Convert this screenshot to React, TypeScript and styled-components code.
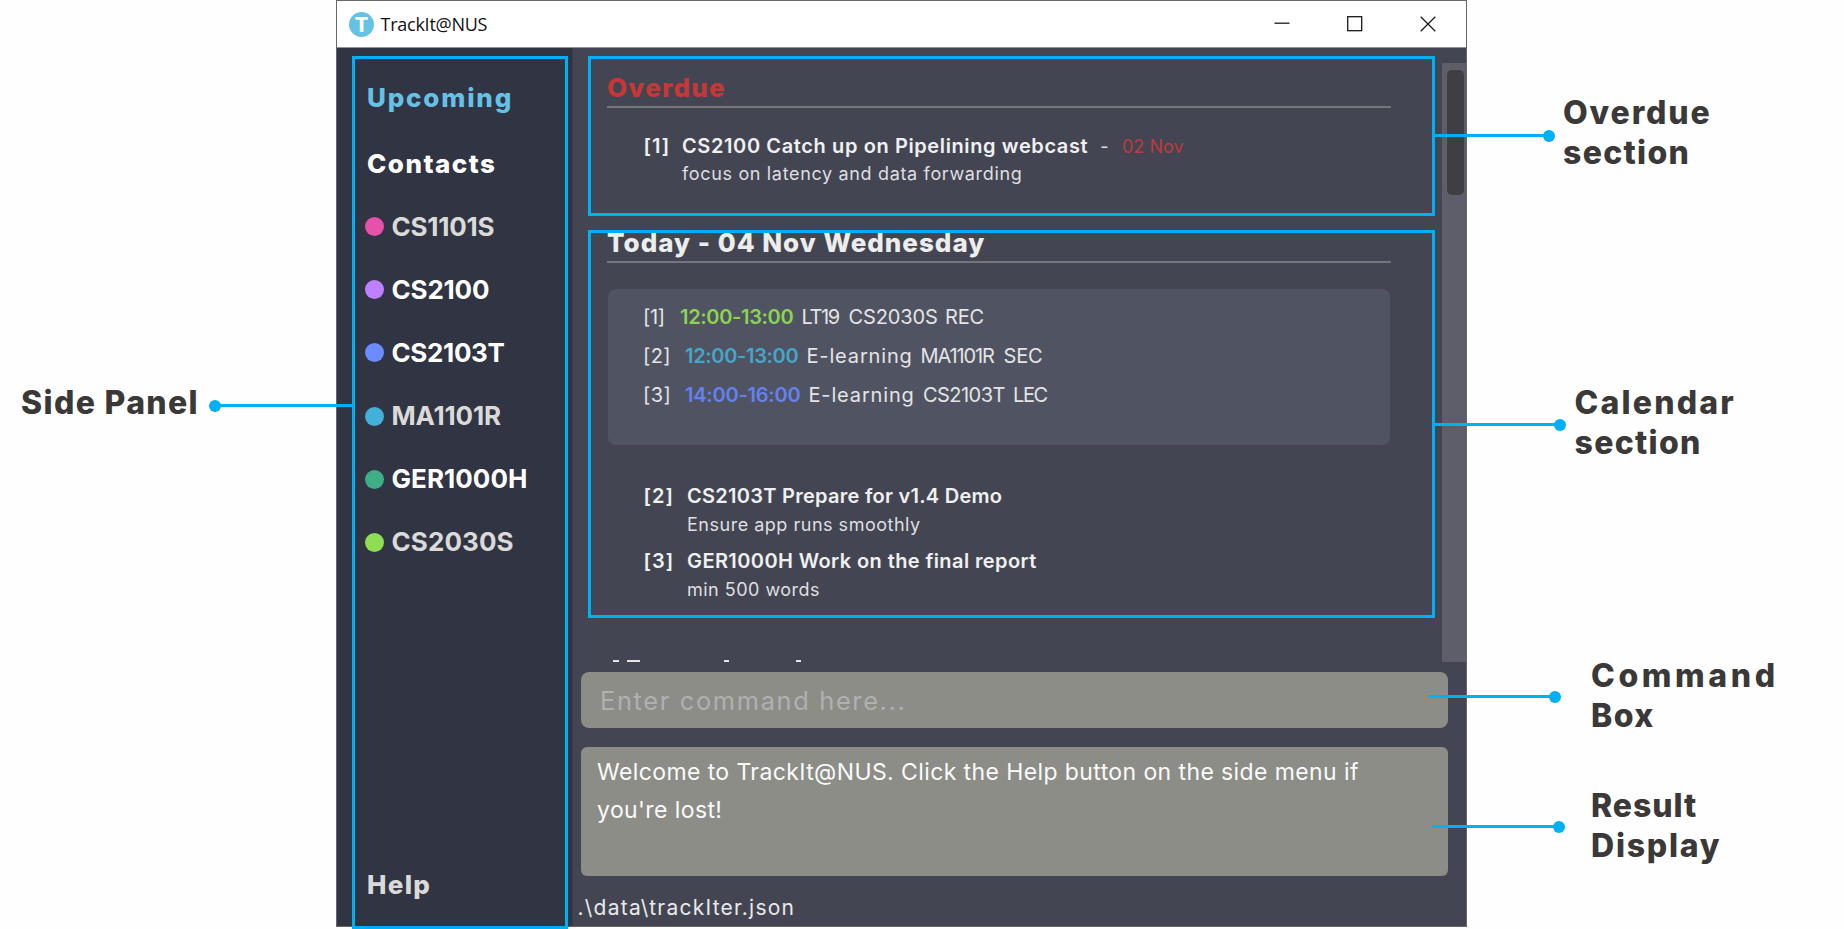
import React from "react";
import styled, { createGlobalStyle } from "styled-components";

const ACCENT = "#00b0f4";

const GlobalStyle = createGlobalStyle`
  * { box-sizing: border-box; }
  body {
    margin: 0;
    background: #fefefe;
    font-family: Inter, "Liberation Sans", sans-serif;
    overflow: hidden;
  }
`;

const Page = styled.div`
  position: relative;
  display: flex;
  width: 1844px;
  height: 929px;
  overflow: hidden;
`;

/* ---------- annotation labels ---------- */

const LeftNotes = styled.div`
  width: 336px;
  padding: 383px 0 0 21px;
`;

const RightNotes = styled.div`
  width: 377px;
  padding-top: 93px;
  display: flex;
  flex-direction: column;
`;

const Note = styled.div<{ $top?: number; $left?: number }>`
  margin-top: ${(p) => p.$top ?? 0}px;
  margin-left: ${(p) => p.$left ?? 0}px;
  font-size: 32px;
  line-height: 40px;
  font-weight: 800;
  color: #3a3938;
  white-space: nowrap;
`;

const NoteLine = styled.div<{ $ls: number }>`
  letter-spacing: ${(p) => p.$ls}px;
`;

/* ---------- annotation overlay ---------- */

const Frame = styled.div<{ $x: number; $y: number; $w: number; $h: number }>`
  position: absolute;
  left: ${(p) => p.$x}px;
  top: ${(p) => p.$y}px;
  width: ${(p) => p.$w}px;
  height: ${(p) => p.$h}px;
  border: 3px solid ${ACCENT};
`;

const Connector = styled.div<{ $x: number; $y: number; $w: number; $dot: "left" | "right" }>`
  position: absolute;
  left: ${(p) => p.$x}px;
  top: ${(p) => p.$y}px;
  width: ${(p) => p.$w}px;
  height: 3px;
  background: ${ACCENT};

  &::after {
    content: "";
    position: absolute;
    top: -4.5px;
    ${(p) => p.$dot}: -6px;
    width: 12px;
    height: 12px;
    border-radius: 50%;
    background: ${ACCENT};
  }
`;

/* ---------- window ---------- */

const Window = styled.div`
  width: 1131px;
  height: 927px;
  border: 1px solid #66676a;
  display: flex;
  flex-direction: column;
`;

const TitleBar = styled.div`
  height: 47px;
  flex: none;
  background: #fff;
  border-bottom: 1px solid #8f9595;
  display: flex;
  align-items: center;
  padding: 0 30px 0 12px;
`;

const Logo = styled.div`
  width: 25px;
  height: 25px;
  border-radius: 50%;
  background: #66c1e6;
  color: #fff;
  font-size: 20px;
  font-weight: 800;
  line-height: 26px;
  text-align: center;
`;

const Title = styled.div`
  flex: 1;
  margin-left: 6.5px;
  font-family: "Open Sans", "Noto Sans", sans-serif;
  font-size: 18px;
  letter-spacing: -0.25px;
  color: #111;
`;

const WindowButtons = styled.div`
  display: flex;
  gap: 57px;
  svg {
    display: block;
    width: 16px;
    height: 16px;
    fill: none;
    stroke: #1a1a1a;
    stroke-width: 1.3;
  }
`;

const Body = styled.div`
  flex: 1;
  display: flex;
  min-height: 0;
`;

/* ---------- side panel ---------- */

const SidePanel = styled.nav`
  width: 236px;
  flex: none;
  background: #313443;
  border-right: 1px solid #3a3d4a;
  display: flex;
  flex-direction: column;
  padding: 32px 0 23px 28px;
`;

const Link = styled.div<{ $top?: number; $ls: number; $color?: string }>`
  margin: ${(p) => p.$top ?? 0}px 0 0 2px;
  font-size: 26px;
  line-height: 36px;
  font-weight: 800;
  letter-spacing: ${(p) => p.$ls}px;
  color: ${(p) => p.$color ?? "#fff"};
`;

const Modules = styled.div`
  flex: 1;
  display: flex;
  flex-direction: column;
  gap: 27.2px;
  margin-top: 26.5px;
`;

const Module = styled.div<{ $ls: number; $dim: boolean }>`
  display: flex;
  align-items: center;
  gap: 7.5px;
  height: 36px;
  font-size: 26px;
  line-height: 36px;
  font-weight: 700;
  letter-spacing: ${(p) => p.$ls}px;
  color: ${(p) => (p.$dim ? "#dadad9" : "#fff")};
`;

const Dot = styled.span<{ $color: string }>`
  width: 19px;
  height: 19px;
  border-radius: 50%;
  background: ${(p) => p.$color};
`;

/* ---------- main area ---------- */

const Main = styled.main`
  flex: 1;
  min-width: 0;
  background: #434652;
  display: flex;
  flex-direction: column;
`;

const Scroller = styled.div`
  height: 614px;
  display: flex;
  overflow: hidden;
`;

const Feed = styled.div`
  width: 784px;
  margin-left: 34px;
  padding-top: 22px;
`;

const Heading = styled.h2<{ $color?: string; $ls: number; $top?: number }>`
  margin: ${(p) => p.$top ?? 0}px 0 0;
  height: 38px;
  border-bottom: 2px solid #75767a;
  font-size: 26px;
  line-height: 36px;
  font-weight: 800;
  letter-spacing: ${(p) => p.$ls}px;
  color: ${(p) => p.$color ?? "#ededee"};
`;

const Task = styled.div<{ $top: number; $indent: number }>`
  display: grid;
  grid-template-columns: ${(p) => p.$indent}px auto;
  row-gap: 2.5px;
  margin: ${(p) => p.$top}px 0 0 36.5px;
`;

const TaskText = styled.div<{ $ls: number }>`
  font-size: 20px;
  line-height: 28px;
  font-weight: 600;
  letter-spacing: ${(p) => p.$ls}px;
  color: #f0f0f1;
  white-space: nowrap;
`;

const TaskTitle = styled.div`
  display: flex;
  align-items: baseline;
`;

const Due = styled.span<{ $color: string; $left: number }>`
  margin-left: ${(p) => p.$left}px;
  font-size: 18px;
  color: ${(p) => p.$color};
`;

const TaskNote = styled.div<{ $ls: number }>`
  grid-column: 2;
  font-size: 18px;
  line-height: 24px;
  letter-spacing: ${(p) => p.$ls}px;
  color: #dfdfe1;
`;

const Lessons = styled.div`
  width: 782px;
  height: 156px;
  margin: 26px 0 0 0.5px;
  padding: 9px 0 0 35.5px;
  border-radius: 8px;
  background: #505462;
`;

const Lesson = styled.div`
  display: flex;
  height: 39.3px;
  font-size: 20px;
  line-height: 39px;
  color: #e4e4e6;
`;

const Word = styled.span<{ $w: number; $ls: number; $color?: string }>`
  width: ${(p) => p.$w}px;
  letter-spacing: ${(p) => p.$ls}px;
  white-space: nowrap;
  color: ${(p) => p.$color ?? "inherit"};
  font-weight: ${(p) => (p.$color ? 600 : 400)};
`;

const NextDay = styled.div`
  display: flex;
  margin: 58.5px 0 0 6px;
`;

const Sliver = styled.span<{ $w: number; $gap: number }>`
  width: ${(p) => p.$w}px;
  height: 2px;
  margin-right: ${(p) => p.$gap}px;
  background: #e6e6e8;
`;

const ScrollTrack = styled.div`
  width: 24px;
  margin: 15px 0 0 auto;
  padding: 7px 2.5px 0 5px;
  background: #5d5e6a;
`;

const ScrollThumb = styled.div`
  height: 125px;
  border-radius: 5px;
  background: #3f3f43;
`;

const CommandBox = styled.div`
  flex: none;
  width: 867px;
  height: 56px;
  margin: 10px 0 0 8px;
  padding-left: 19px;
  border-radius: 8px;
  background: #8c8d87;
  font-size: 25.5px;
  line-height: 58px;
  letter-spacing: 1.6px;
  color: #b0b0b1;
`;

const ResultBox = styled.div`
  flex: none;
  width: 867px;
  height: 129px;
  margin: 19px 0 0 8px;
  padding: 7px 0 0 16px;
  border-radius: 6px;
  background: #8c8d87;
  font-size: 23px;
  line-height: 37.5px;
  letter-spacing: 0.4px;
  white-space: nowrap;
  color: #fafafa;
`;

const StatusBar = styled.div`
  margin: 17px 0 0 4.5px;
  font-size: 21px;
  line-height: 30px;
  letter-spacing: 1.23px;
  color: #e9e9ea;
`;

type Lecture = { id: [string, number, number]; time: [string, number, number, string]; words: [string, number, number][] };

const modules: [string, string, number, boolean][] = [
  ["CS1101S", "#e651a9", -0.24, true],
  ["CS2100", "#be80ff", -0.18, false],
  ["CS2103T", "#6b8bff", -0.36, false],
  ["MA1101R", "#43b1d7", -0.17, true],
  ["GER1000H", "#3eae86", 0.05, false],
  ["CS2030S", "#8edd52", 0.09, true],
];

const lessons: Lecture[] = [
  {
    id: ["[1]", 37, -0.3],
    time: ["12:00-13:00", 121.5, -0.33, "#8bd450"],
    words: [["LT19", 47, -1.4], ["CS2030S", 96.5, -0.12], ["REC", 60, -0.2]],
  },
  {
    id: ["[2]", 42, 0.4],
    time: ["12:00-13:00", 121.5, -0.33, "#46a6c9"],
    words: [["E-learning", 114, 0.85], ["MA1101R", 83, -1.1], ["SEC", 60, -0.18]],
  },
  {
    id: ["[3]", 42, 0.4],
    time: ["14:00-16:00", 123.5, -0.22, "#6581ee"],
    words: [["E-learning", 114.5, 0.85], ["CS2103T", 90, -0.54], ["LEC", 60, -1.4]],
  },
];

export default function App() {
  return (
    <>
      <GlobalStyle />
      <Page>
        <LeftNotes>
          <Note>
            <NoteLine $ls={1.35}>Side Panel</NoteLine>
          </Note>
        </LeftNotes>

        <Window>
          <TitleBar>
            <Logo>T</Logo>
            <Title>TrackIt@NUS</Title>
            <WindowButtons>
              <svg viewBox="0 0 16 16"><path d="M0.5 7.2H15.5" /></svg>
              <svg viewBox="0 0 16 16"><rect x="0.7" y="0.7" width="14" height="14" /></svg>
              <svg viewBox="0 0 16 16"><path d="M0.7 0.7L15.3 15.3M15.3 0.7L0.7 15.3" /></svg>
            </WindowButtons>
          </TitleBar>

          <Body>
            <SidePanel>
              <Link $ls={1.8} $color="#66c1e6">Upcoming</Link>
              <Link $top={30} $ls={1.5}>Contacts</Link>
              <Modules>
                {modules.map(([code, color, ls, dim]) => (
                  <Module key={code} $ls={ls} $dim={dim}>
                    <Dot $color={color} />
                    {code}
                  </Module>
                ))}
              </Modules>
              <Link $ls={1.3} $color="#dadad9">Help</Link>
            </SidePanel>

            <Main>
              <Scroller>
                <Feed>
                  <Heading $color="#c63738" $ls={1.25}>Overdue</Heading>
                  <Task $top={23.5} $indent={38.5}>
                    <TaskText $ls={1}>[1]</TaskText>
                    <TaskTitle>
                      <TaskText $ls={0.61}>CS2100 Catch up on Pipelining webcast</TaskText>
                      <Due $left={12} $color="#e0e0e2">-</Due>
                      <Due $left={13.5} $color="#bf393d">02 Nov</Due>
                    </TaskTitle>
                    <TaskNote $ls={0.66}>focus on latency and data forwarding</TaskNote>
                  </Task>

                  <Heading $top={38.5} $ls={0.99}>Today - 04 Nov Wednesday</Heading>
                  <Lessons>
                    {lessons.map(({ id, time, words }) => (
                      <Lesson key={id[0]}>
                        <Word $w={id[1]} $ls={id[2]}>{id[0]}</Word>
                        <Word $w={time[1]} $ls={time[2]} $color={time[3]}>{time[0]}</Word>
                        {words.map(([text, w, ls]) => (
                          <Word key={text} $w={w} $ls={ls}>{text}</Word>
                        ))}
                      </Lesson>
                    ))}
                  </Lessons>
                  <Task $top={37.5} $indent={43.5}>
                    <TaskText $ls={1}>[2]</TaskText>
                    <TaskText $ls={0.27}>CS2103T Prepare for v1.4 Demo</TaskText>
                    <TaskNote $ls={0.51}>Ensure app runs smoothly</TaskNote>
                  </Task>
                  <Task $top={10.5} $indent={43.5}>
                    <TaskText $ls={1}>[3]</TaskText>
                    <TaskText $ls={0.4}>GER1000H Work on the final report</TaskText>
                    <TaskNote $ls={0.48}>min 500 words</TaskNote>
                  </Task>
                  <NextDay>
                    <Sliver $w={6} $gap={8} />
                    <Sliver $w={13} $gap={84} />
                    <Sliver $w={5} $gap={67} />
                    <Sliver $w={5} $gap={0} />
                  </NextDay>
                </Feed>
                <ScrollTrack>
                  <ScrollThumb />
                </ScrollTrack>
              </Scroller>

              <CommandBox>Enter command here...</CommandBox>
              <ResultBox>
                Welcome to TrackIt@NUS. Click the Help button on the side menu if
                <br />
                you're lost!
              </ResultBox>
              <StatusBar>.\data\trackIter.json</StatusBar>
            </Main>
          </Body>
        </Window>

        <RightNotes>
          <Note $left={96}>
            <NoteLine $ls={1.85}>Overdue</NoteLine>
            <NoteLine $ls={1.3}>section</NoteLine>
          </Note>
          <Note $top={210} $left={107.5}>
            <NoteLine $ls={2.2}>Calendar</NoteLine>
            <NoteLine $ls={1.3}>section</NoteLine>
          </Note>
          <Note $top={193} $left={124}>
            <NoteLine $ls={3.6}>Command</NoteLine>
            <NoteLine $ls={1.4}>Box</NoteLine>
          </Note>
          <Note $top={50} $left={124}>
            <NoteLine $ls={0.95}>Result</NoteLine>
            <NoteLine $ls={1.75}>Display</NoteLine>
          </Note>
        </RightNotes>

        <Frame $x={352} $y={56} $w={216} $h={873} />
        <Frame $x={588} $y={56} $w={847} $h={160} />
        <Frame $x={588} $y={230} $w={847} $h={388} />
        <Connector $x={215} $y={404} $w={139} $dot="left" />
        <Connector $x={1434} $y={134} $w={115} $dot="right" />
        <Connector $x={1434} $y={423} $w={126} $dot="right" />
        <Connector $x={1428} $y={695} $w={127} $dot="right" />
        <Connector $x={1432} $y={825} $w={127} $dot="right" />
      </Page>
    </>
  );
}
